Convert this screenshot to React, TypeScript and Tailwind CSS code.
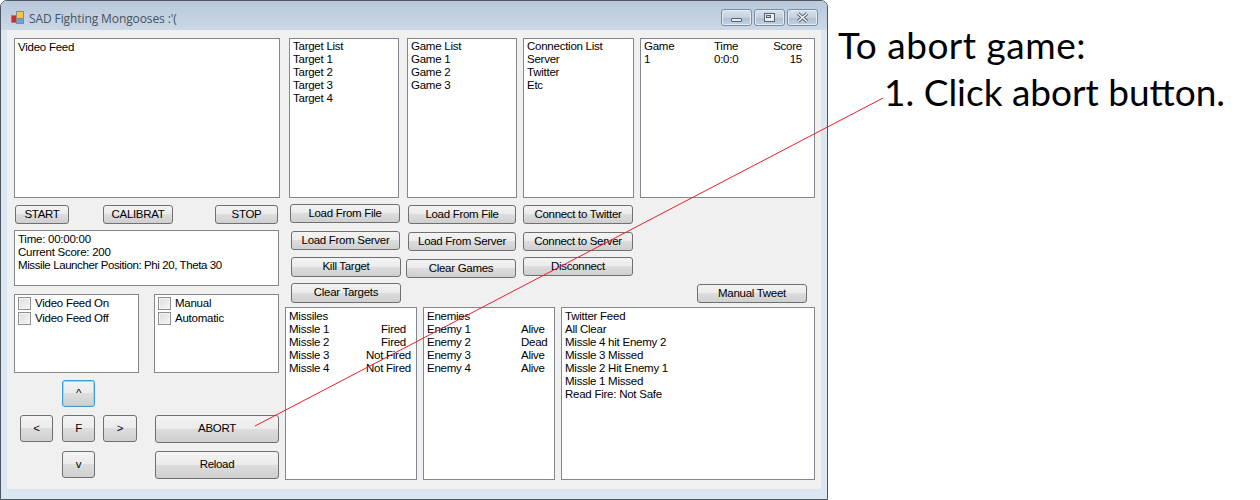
import React from 'react';

const BTN =
  "flex items-center justify-center rounded-[3px] border border-[#707070] bg-[linear-gradient(#f3f3f3_0%,#ebebeb_48%,#dddddd_50%,#cfcfcf_100%)] text-[11.5px] leading-none tracking-[-0.3px] text-black";

const Box: React.FC<{ className?: string; children?: React.ReactNode }> = ({ className, children }) => (
  <div className={`border border-[#828790] bg-white pl-[3px] text-[11.5px] leading-[13px] tracking-[-0.25px] text-black ${className || 'pt-[1px]'}`}>
    {children}
  </div>
);

const Check: React.FC<{ label: string }> = ({ label }) => (
  <div className="flex h-[15px] items-center gap-[4px] pl-[1px]">
    <span className="h-[13px] w-[13px] border border-[#8e8f8f] bg-[linear-gradient(135deg,#dcdcdc,#f6f6f6)] shadow-[inset_0_0_0_1px_#f4f4f4]" />
    <span>{label}</span>
  </div>
);

const missiles = [
  ['Missle 1', 'Fired', 'pr-[10px]'],
  ['Missle 2', 'Fired', 'pr-[10px]'],
  ['Missle 3', 'Not Fired', 'pr-[5px]'],
  ['Missle 4', 'Not Fired', 'pr-[5px]'],
];

const enemies = [
  ['Enemy 1', 'Alive'],
  ['Enemy 2', 'Dead'],
  ['Enemy 3', 'Alive'],
  ['Enemy 4', 'Alive'],
];

const WinBtn: React.FC<{ children: React.ReactNode }> = ({ children }) => (
  <div className="flex h-[17px] w-[31px] items-center justify-center rounded-[3px] border border-[#7d8c9e] bg-[linear-gradient(#d9e3ee_0%,#c3d0de_50%,#aebfd1_52%,#c4d2e0_100%)] shadow-[inset_0_0_0_1px_#e3ebf3]">
    {children}
  </div>
);

const App: React.FC = () => {
  return (
    <div className="relative flex h-[500px] w-[1260px] bg-white font-['Liberation_Sans',sans-serif]">
      {/* form window */}
      <div className="flex h-[500px] w-[828px] shrink-0 flex-col rounded-t-[7px] border border-[#4d5661] bg-[#dbe6f3] px-[6px] pb-[9px]">
        <div className="-mx-[6px] flex h-[29px] shrink-0 items-center rounded-t-[6px] bg-[linear-gradient(#b8c9db,#cbd8e6)] pl-[9px] pr-[9px] pt-[4px]">
          <svg width="15" height="15" viewBox="0 0 15 15">
            <rect x="1.5" y="5.5" width="5" height="7" fill="#c8302a" stroke="#8a8a8a" />
            <rect x="6.5" y="1.5" width="7" height="7" fill="#f5c63c" stroke="#8a8a8a" />
            <rect x="6.5" y="8.5" width="7" height="5" fill="#6f9fdc" stroke="#8a8a8a" />
          </svg>
          <span className="ml-[4px] mt-[2px] font-['Open_Sans',sans-serif] text-[12px] tracking-[-0.1px] text-[#46525e]">SAD Fighting Mongooses :'(</span>
          <div className="ml-auto flex gap-[2px]">
            <WinBtn>
              <span className="mt-[4px] h-[4px] w-[11px] rounded-[1px] border border-[#56616d] bg-[#e8edf3]" />
            </WinBtn>
            <WinBtn>
              <span className="h-[9px] w-[11px] border border-[#56616d] bg-[#e8edf3] p-[1px]">
                <span className="block h-[3px] w-[5px] border border-[#56616d] bg-[#c8d4e0]" />
              </span>
            </WinBtn>
            <WinBtn>
              <svg width="13" height="11" viewBox="0 0 13 11">
                <path d="M2 1.5 L11 9.5 M11 1.5 L2 9.5" stroke="#56616d" strokeWidth="3.4" />
                <path d="M2 1.5 L11 9.5 M11 1.5 L2 9.5" stroke="#eef2f6" strokeWidth="1.6" />
              </svg>
            </WinBtn>
          </div>
        </div>

        {/* client area */}
        <div className="flex h-[459px] shrink-0 bg-[#f0f0f0] pl-[7px] pt-[8px]">
          <div className="flex w-[266px] shrink-0 flex-col">
            <Box className="h-[160px] w-[266px] pt-[2px]">Video Feed</Box>
            <div className="mt-[7px] flex h-[19px] pl-[1px]">
              <div className={`${BTN} h-[19px] w-[54px]`}>START</div>
              <div className={`${BTN} ml-[34px] h-[19px] w-[70px]`}>CALIBRAT</div>
              <div className={`${BTN} ml-[42px] h-[19px] w-[63px]`}>STOP</div>
            </div>
            <Box className="mt-[6px] h-[56px] w-[265px] pt-[2px]">
              <div>Time: 00:00:00</div>
              <div>Current Score: 200</div>
              <div className="tracking-[-0.4px]">Missile Launcher Position: Phi 20, Theta 30</div>
            </Box>
            <div className="mt-[8px] flex gap-[15px]">
              <Box className="h-[79px] w-[125px] !pl-[2px] pt-[1px]">
                <Check label="Video Feed On" />
                <Check label="Video Feed Off" />
              </Box>
              <Box className="h-[79px] w-[125px] !pl-[2px] pt-[1px]">
                <Check label="Manual" />
                <Check label="Automatic" />
              </Box>
            </div>
            <div className="mt-[7px] flex">
              <div className="grid w-[141px] grid-cols-[33px_33px_33px] grid-rows-[27px_27px_27px] gap-x-[9px] gap-y-[8px] pl-[6px]">
                <div className={`${BTN} col-start-2 !border-[#3c9bd6] shadow-[inset_0_0_0_1px_#9fd4f2]`}>^</div>
                <div className={`${BTN} col-start-1 row-start-2`}>&lt;</div>
                <div className={`${BTN} col-start-2 row-start-2`}>F</div>
                <div className={`${BTN} col-start-3 row-start-2 -ml-[1px]`}>&gt;</div>
                <div className={`${BTN} col-start-2 row-start-3 mt-[1px] h-[27px]`}>v</div>
              </div>
              <div className="flex w-[124px] flex-col gap-[8px] pt-[35px]">
                <div className={`${BTN} h-[28px]`}>ABORT</div>
                <div className={`${BTN} h-[28px]`}>Reload</div>
              </div>
            </div>
          </div>

          <div className="ml-[5px] flex w-[530px] shrink-0 flex-col">
            <div className="flex pl-[4px]">
              <Box className="h-[160px] w-[110px] pt-[1px]">
                {['Target List', 'Target 1', 'Target 2', 'Target 3', 'Target 4'].map((t) => (
                  <div key={t}>{t}</div>
                ))}
              </Box>
              <Box className="ml-[8px] h-[160px] w-[110px] pt-[1px]">
                {['Game List', 'Game 1', 'Game 2', 'Game 3'].map((t) => (
                  <div key={t}>{t}</div>
                ))}
              </Box>
              <Box className="ml-[6px] h-[160px] w-[111px] pt-[1px]">
                {['Connection List', 'Server', 'Twitter', 'Etc'].map((t) => (
                  <div key={t}>{t}</div>
                ))}
              </Box>
              <Box className="ml-[6px] h-[160px] w-[175px] pt-[1px]">
                <div className="grid grid-cols-[70px_47px_41px]">
                  <span>Game</span>
                  <span>Time</span>
                  <span className="text-right">Score</span>
                  <span>1</span>
                  <span>0:0:0</span>
                  <span className="text-right">15</span>
                </div>
              </Box>
            </div>

            {/* button columns */}
            <div className="flex h-[109px]">
              <div className="ml-[5px] flex w-[110px] flex-col pt-[6px]">
                <div className={`${BTN} h-[19px] w-[110px]`}>Load From File</div>
                <div className={`${BTN} ml-[1px] mt-[8px] h-[19px] w-[109px]`}>Load From Server</div>
                <div className={`${BTN} ml-[1px] mt-[7px] h-[20px] w-[110px]`}>Kill Target</div>
                <div className={`${BTN} ml-[1px] mt-[6px] h-[20px] w-[110px]`}>Clear Targets</div>
              </div>
              <div className="ml-[6px] flex w-[110px] flex-col pt-[7px]">
                <div className={`${BTN} ml-[2px] h-[19px] w-[108px]`}>Load From File</div>
                <div className={`${BTN} ml-[2px] mt-[8px] h-[19px] w-[108px]`}>Load From Server</div>
                <div className={`${BTN} mt-[8px] h-[19px] w-[110px]`}>Clear Games</div>
              </div>
              <div className="ml-[7px] flex w-[110px] flex-col pt-[7px]">
                <div className={`${BTN} h-[19px] w-[110px]`}>Connect to Twitter</div>
                <div className={`${BTN} mt-[8px] h-[19px] w-[110px]`}>Connect to Server</div>
                <div className={`${BTN} mt-[6px] h-[19px] w-[110px]`}>Disconnect</div>
              </div>
              <div className="ml-[64px] pt-[86px]">
                <div className={`${BTN} h-[19px] w-[110px]`}>Manual Tweet</div>
              </div>
            </div>

            <div className="flex gap-[6px]">
              <Box className="h-[173px] w-[132px] pt-[2px]">
                <div>Missiles</div>
                {missiles.map(([name, state, pad]) => (
                  <div key={name} className={`flex justify-between ${pad}`}>
                    <span>{name}</span>
                    <span>{state}</span>
                  </div>
                ))}
              </Box>
              <Box className="h-[173px] w-[132px] pt-[2px]">
                <div>Enemies</div>
                {enemies.map(([name, state]) => (
                  <div key={name} className="grid grid-cols-[94px_1fr]">
                    <span>{name}</span>
                    <span>{state}</span>
                  </div>
                ))}
              </Box>
              <Box className="h-[173px] w-[254px] pt-[2px]">
                {[
                  'Twitter Feed',
                  'All Clear',
                  'Missle 4 hit Enemy 2',
                  'Missle 3 Missed',
                  'Missle 2 Hit Enemy 1',
                  'Missle 1 Missed',
                  'Read Fire: Not Safe',
                ].map((t) => (
                  <div key={t}>{t}</div>
                ))}
              </Box>
            </div>
          </div>
        </div>
      </div>

      {/* annotation text */}
      <div className="ml-[10px] pt-[21px] font-['Lato',sans-serif] text-[37px] leading-[47px] text-black">
        <div className="tracking-[0.5px]">To abort game:</div>
        <div className="pl-[46px]">1. Click abort button.</div>
      </div>

      {/* callout line laid over the form */}
      <svg className="pointer-events-none absolute left-0 top-0" width="1260" height="500">
        <line x1="883" y1="98" x2="255" y2="426" stroke="#e8202a" strokeWidth="1" />
      </svg>
    </div>
  );
};

export default App;
